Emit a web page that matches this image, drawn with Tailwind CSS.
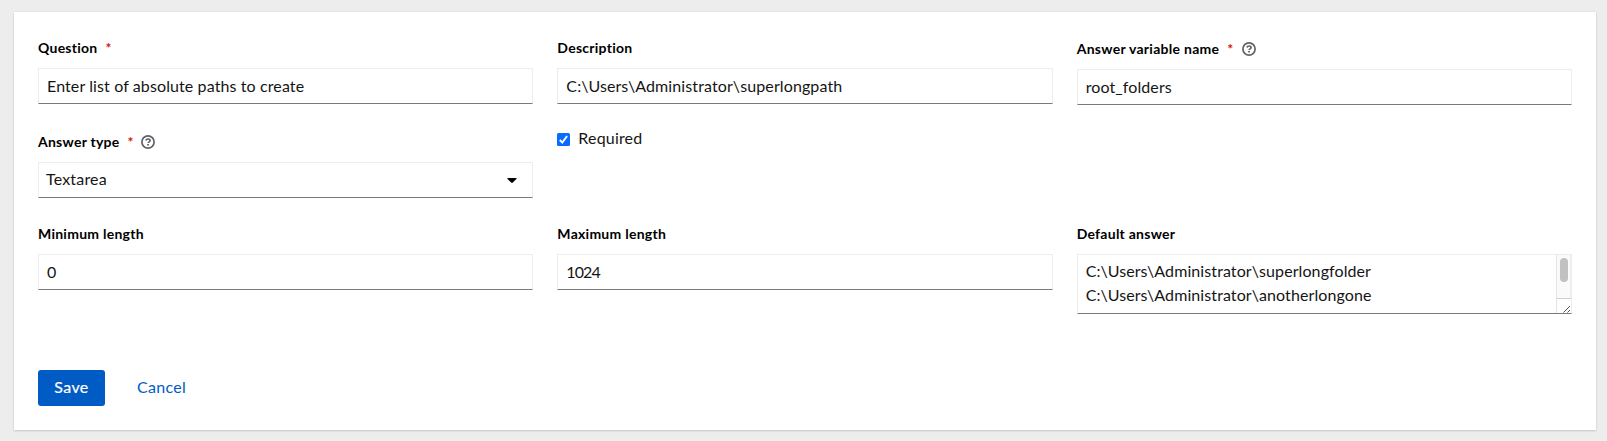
<!DOCTYPE html>
<html lang="en">
<head>
<meta charset="utf-8">
<title>Survey question</title>
<script src="https://cdn.jsdelivr.net/npm/@tailwindcss/browser@4"></script>
</head>
<body class="h-[441px] overflow-hidden bg-[#ededed] pt-3 pr-[11px] pl-3.5 font-['Lato',sans-serif] text-base tracking-[0.11px] text-[#151515]">
<form class="flex h-[418px] flex-col bg-white px-6 pt-6 shadow-[0_1px_2px_rgba(3,3,3,0.14),0_0_2px_rgba(3,3,3,0.08)]">
  <div class="grid grid-cols-3 gap-x-6">
    <div class="flex h-[94px] flex-col">
      <label class="flex h-8 pt-px text-sm leading-[21px] font-bold tracking-[0.26px] text-black">Question<span class="ml-2 text-[#c9190b]">*</span></label>
      <div class="h-9 border border-[#ededed] border-b-[#7a7a7a] px-2 leading-[33px] whitespace-pre">Enter list of absolute paths to create</div>
    </div>
    <div class="flex h-[94px] flex-col">
      <label class="flex h-8 pt-px text-sm leading-[21px] font-bold tracking-[0.26px] text-black">Description</label>
      <div class="h-9 border border-[#ededed] border-b-[#7a7a7a] px-2 leading-[33px]">C:\Users\Administrator\superlongpath</div>
    </div>
    <div class="flex h-[94px] flex-col pt-px">
      <label class="flex h-8 pt-px text-sm leading-[21px] font-bold tracking-[0.28px] text-black">Answer variable name<span class="ml-2 text-[#c9190b]">*</span>
        <svg class="mt-[4px] ml-[8px] size-3.5" viewBox="0 0 14 14" fill="none" stroke="#5f6368"><circle cx="7" cy="7" r="6.1" stroke-width="1.7"/><path d="M4.900 5.500C5.200 4.400 6 4 7 4c1.200 0 2.100.6 2.100 1.600 0 1.300-1.900 1.200-1.900 2.500" stroke-width="1.700"/><path d="M7.100 9v1.600" stroke-width="1.800"/></svg>
      </label>
      <div class="h-9 border border-[#ededed] border-b-[#7a7a7a] px-2 leading-[33px]">root_folders</div>
    </div>

    <div class="flex h-[92px] flex-col">
      <label class="flex h-8 pt-px text-sm leading-[21px] font-bold tracking-[0.26px] text-black">Answer type<span class="ml-2 text-[#c9190b]">*</span>
        <svg class="mt-[4px] ml-[7px] size-3.5" viewBox="0 0 14 14" fill="none" stroke="#5f6368"><circle cx="7" cy="7" r="6.1" stroke-width="1.7"/><path d="M4.900 5.500C5.200 4.400 6 4 7 4c1.200 0 2.100.6 2.100 1.600 0 1.300-1.900 1.200-1.900 2.500" stroke-width="1.700"/><path d="M7.100 9v1.600" stroke-width="1.800"/></svg>
      </label>
      <div class="flex h-9 justify-between border border-[#ededed] border-b-[#7a7a7a] pr-[15px] pl-[7px] leading-[31px] tracking-[0.180px]">Textarea
        <svg class="mt-[15px] h-[5px] w-[10px]" viewBox="0 0 10 5"><path d="M.8 0h8.400q.8.300.200 1L5.800 4.600q-.8.700-1.600 0L.6 1Q0 .300.8 0z" fill="#000"/></svg>
      </div>
    </div>
    <div class="flex h-[92px] items-start">
      <svg class="mt-[3px] size-[13px]" viewBox="0 0 13 13"><rect width="13" height="13" rx="1.500" fill="#0a6cff"/><path d="M2.800 7l2.500 2.600L10.100 3" fill="none" stroke="#fff" stroke-width="1.900"/></svg>
      <span class="ml-2 -mt-1 leading-6 tracking-[0.180px]">Required</span>
    </div>
    <div></div>

    <div class="flex flex-col">
      <label class="flex h-8 pt-px text-sm leading-[21px] font-bold tracking-[0.26px] text-black">Minimum length</label>
      <div class="h-9 border border-[#ededed] border-b-[#7a7a7a] px-2 leading-[33px]">0</div>
    </div>
    <div class="flex flex-col">
      <label class="flex h-8 pt-px text-sm leading-[21px] font-bold tracking-[0.26px] text-black">Maximum length</label>
      <div class="h-9 border border-[#ededed] border-b-[#7a7a7a] px-2 leading-[33px] tracking-[-0.9px]">1024</div>
    </div>
    <div class="flex flex-col">
      <label class="flex h-8 pt-px text-sm leading-[21px] font-bold tracking-[0.26px] text-black">Default answer</label>
      <div class="flex h-[60px] justify-between border border-[#ededed] border-b-[#7a7a7a] pl-2">
        <div class="pt-1 leading-6 tracking-[0.09px]">C:\Users\Administrator\superlongfolder<br>C:\Users\Administrator\anotherlongone</div>
        <div class="flex w-[15px] flex-col border-l border-[#e4e4e4] bg-[#fafafa]">
          <div class="flex h-[43px] justify-center border-r border-[#ededed] pt-[3px]"><div class="h-6 w-2 rounded-full bg-[#c1c1c1]"></div></div>
          <div class="flex flex-1 items-end justify-end border-t border-[#d0d0d0] bg-white"><svg class="size-2" viewBox="0 0 8 8" stroke="#444" stroke-width="0.900"><path d="M0.500 7.500L7 1M4.500 7.500L7 5"/></svg></div>
        </div>
      </div>
    </div>
  </div>
  <div class="mt-14 flex">
    <button type="button" class="h-9 w-[67px] rounded-[3px] bg-[#005bc4] pb-[3px] text-center tracking-[0.400px] text-white [-webkit-text-stroke:0.2px_white]">Save</button>
    <button type="button" class="ml-4 h-9 px-4 pb-[3px] tracking-[0.300px] text-[#005bc4]">Cancel</button>
  </div>
</form>
</body>
</html>
